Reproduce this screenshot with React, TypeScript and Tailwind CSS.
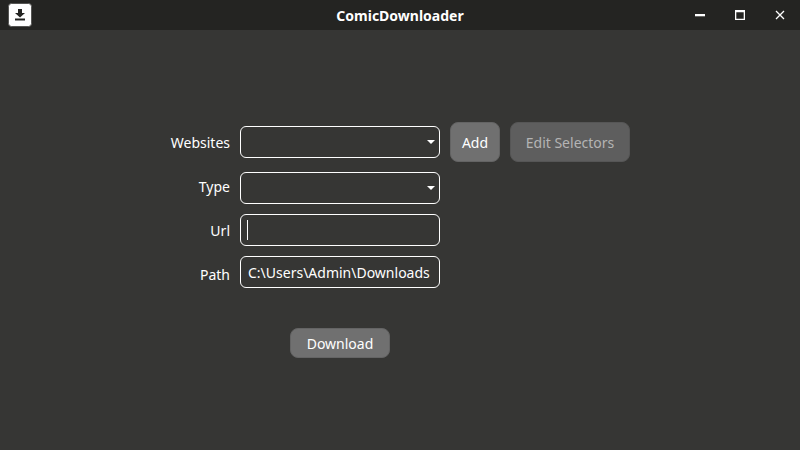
import React, { useState } from "react";

const labelClass = "block whitespace-nowrap text-right leading-10";
const fieldClass =
  "block h-8 w-full rounded-md border border-white bg-transparent text-white outline-none";
const buttonClass = "rounded-lg border border-[#646464] bg-[#707070] pt-0.5 leading-none";

function Caption({ label, children }: { label: string; children: React.ReactNode }) {
  return (
    <button type="button" aria-label={label} className="flex h-full w-10 items-center justify-center text-white hover:bg-white/10">
      {children}
    </button>
  );
}

function TitleBar() {
  return (
    <header className="grid h-[30px] grid-cols-[1fr_auto_1fr] items-center bg-[#242422]">
      <svg className="ml-2" width="24" height="24" viewBox="0 0 24 24" aria-hidden="true">
        <rect x="0.5" y="0.5" width="23" height="23" rx="3" fill="#fff" stroke="#555553" />
        <path d="M10 6h4v4h3l-5 4.5L7 10h3z" fill="#242422" />
        <rect x="7" y="15.5" width="10" height="2" fill="#242422" />
      </svg>
      <h1 className="pt-px text-sm font-bold">ComicDownloader</h1>
      <div className="flex h-full justify-end">
        <Caption label="Minimize">
          <svg width="10" height="10" viewBox="0 0 10 10">
            <path d="M0 4h10v2.3H0z" fill="currentColor" />
          </svg>
        </Caption>
        <Caption label="Maximize">
          <svg width="10" height="10" viewBox="0 0 10 10">
            <path d="M0 0h10v10H0zM1.3 2.3v6.4h7.4V2.3z" fill="currentColor" fillRule="evenodd" />
          </svg>
        </Caption>
        <Caption label="Close">
          <svg width="10" height="10" viewBox="0 0 10 10">
            <path d="M1 1l8 8M9 1l-8 8" stroke="currentColor" strokeWidth="1.3" />
          </svg>
        </Caption>
      </div>
    </header>
  );
}

function Dropdown({ id }: { id: string }) {
  return (
    <div className="relative w-full">
      <select id={id} className={`${fieldClass} appearance-none px-2`} />
      <svg className="pointer-events-none absolute top-3.5 right-[5px]" width="8" height="4" viewBox="0 0 8 4" aria-hidden="true">
        <path d="M0 0h8L4 4z" fill="#fff" />
      </svg>
    </div>
  );
}

export default function App() {
  const [url, setUrl] = useState("");
  return (
    <div className="flex min-h-screen flex-col bg-[#363634] font-['Noto_Sans',sans-serif] text-sm text-white">
      <TitleBar />
      <main className="flex flex-1 items-center justify-center">
        <form className="flex items-start gap-2.5" onSubmit={(e) => e.preventDefault()}>
          <div className="flex w-[60px] flex-col items-end gap-1 pt-px">
            <label htmlFor="websites" className={labelClass}>Websites</label>
            <label htmlFor="type" className={labelClass}>Type</label>
            <label htmlFor="url" className={labelClass}>Url</label>
            <label htmlFor="path" className={labelClass}>Path</label>
          </div>

          <div className="flex w-[200px] flex-col items-center gap-2.5">
            <div className="flex h-10 w-full items-center">
              <Dropdown id="websites" />
            </div>
            <Dropdown id="type" />
            <div className="relative w-full">
              <input id="url" value={url} onChange={(e) => setUrl(e.target.value)} className={`${fieldClass} px-[7px]`} />
              {url === "" && <span className="pointer-events-none absolute top-1.5 left-[7px] h-5 w-px bg-white" />}
            </div>
            <input id="path" defaultValue="C:\Users\Admin\Downloads" className={`${fieldClass} px-[7px]`} />
            <button type="submit" className={`${buttonClass} mt-[30px] h-[30px] w-[100px]`}>
              Download
            </button>
          </div>

          <button type="button" className={`${buttonClass} h-10 w-[50px]`}>Add</button>
          <button type="button" disabled className="h-10 w-[120px] rounded-lg border border-[#565656] bg-[#5e5e5e] pt-0.5 leading-none text-[#b4b4b4]">
            Edit Selectors
          </button>
        </form>
      </main>
    </div>
  );
}
